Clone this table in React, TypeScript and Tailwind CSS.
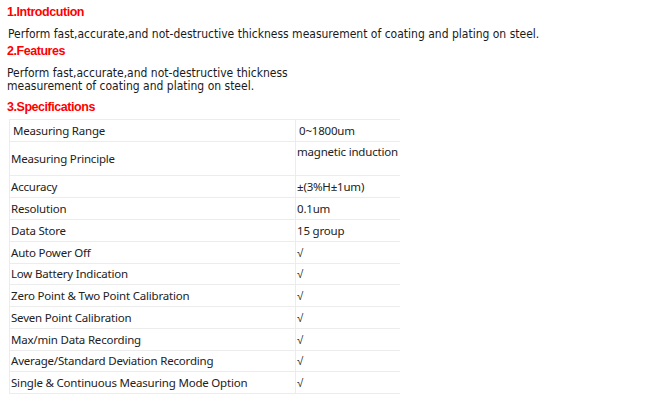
import React from "react";

const rows: { k: string; v: string; h: string; top?: boolean }[] = [
  { k: "Measuring Range", v: "0~1800um", h: "h-[22px]" },
  { k: "Measuring Principle", v: "magnetic induction", h: "h-[34px]", top: true },
  { k: "Accuracy", v: "±(3%H±1um)", h: "h-[22px]" },
  { k: "Resolution", v: "0.1um", h: "h-[22px]" },
  { k: "Data Store", v: "15 group", h: "h-[22px]" },
  { k: "Auto Power Off", v: "√", h: "h-[22px]" },
  { k: "Low Battery Indication", v: "√", h: "h-[21px]" },
  { k: "Zero Point & Two Point Calibration", v: "√", h: "h-[22px]" },
  { k: "Seven Point Calibration", v: "√", h: "h-[22px]" },
  { k: "Max/min Data Recording", v: "√", h: "h-[22px]" },
  { k: "Average/Standard Deviation Recording", v: "√", h: "h-[21px]" },
  { k: "Single & Continuous Measuring Mode Option", v: "√", h: "h-[22px]" },
];

const head = "text-[#ff0000] text-[12.5px] tracking-[-0.45px] leading-[16px] font-bold font-['Liberation_Sans',sans-serif]";
const body = "text-[#1a1a1a] text-[12px] font-['DejaVu_Sans_Condensed','DejaVu_Sans',sans-serif]";

export default function App() {
  return (
    <div className="w-[670px] h-[405px] bg-white overflow-hidden relative">
      <div className="pl-[7px] pt-[4px]">
        <div className={head}>1.Introdcution</div>
        <div className={`mt-[7px] pl-[1px] leading-[14px] ${body}`}>
          Perform fast,accurate,and not-destructive thickness measurement of coating and plating on steel.
        </div>
        <div className={`mt-[2px] ${head}`}>2.Features</div>
        <div className={`mt-[8px] leading-[13px] ${body}`}>
          Perform fast,accurate,and not-destructive thickness
          <br />
          measurement of coating and plating on steel.
        </div>
        <div className={`mt-[6px] ${head}`}>3.Specifications</div>
      </div>
      <div className="ml-[9px] mt-[4px] w-[391px] border-t border-l border-[#ececec] font-['Noto_Sans',sans-serif] text-[11.5px] tracking-[-0.2px] text-[#222]">
        {rows.map((r, i) => (
          <div key={i} className={`flex ${r.h} border-b border-[#ececec]`}>
            <div className={`w-[286px] shrink-0 border-r border-[#ececec] flex items-center ${i === 0 ? "pl-[3px]" : "pl-[1px]"}`}>
              {r.k}
            </div>
            <div className={`flex-1 min-w-0 flex ${r.top ? "items-start pt-[1px]" : "items-center"} ${i === 0 ? "pl-[3px]" : "pl-[1px]"} whitespace-nowrap`}>
              {r.v}
            </div>
          </div>
        ))}
      </div>
    </div>
  );
}
